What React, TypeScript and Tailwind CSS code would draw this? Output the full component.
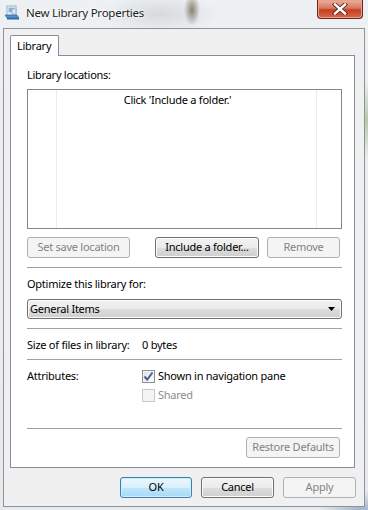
import React from "react";

const font = "font-['Segoe_UI','Noto_Sans','Liberation_Sans',sans-serif] tracking-[-0.25px]";

const btnNormal =
  "h-[21px] rounded-[3px] border border-[#707070] bg-[linear-gradient(to_bottom,#f2f2f2_0%,#ebebeb_50%,#dddddd_51%,#cfcfcf_100%)] shadow-[inset_0_0_0_1px_#fcfcfc] text-[11px] text-black flex items-center justify-center";
const btnDisabled =
  "h-[21px] rounded-[3px] border border-[#adb2b5] bg-[#f4f4f4] text-[11px] text-[#838383] flex items-center justify-center";
const btnDefault =
  "h-[21px] rounded-[3px] border border-[#3c7fb1] bg-[linear-gradient(to_bottom,#eaf6fd_0%,#d9f0fc_50%,#bee6fd_51%,#a7d9f5_100%)] shadow-[inset_0_0_0_1px_#cfeefd] text-[11px] text-black flex items-center justify-center";

const Separator = ({ className = "" }: { className?: string }) => (
  <div className={`h-px bg-[#a0a0a0] ${className}`}></div>
);

const LibraryIcon = () => (
  <svg width="16" height="16" viewBox="0 0 16 16">
    <rect x="3" y="1" width="9" height="9" fill="#f4f7fb" stroke="#8a9bb0" strokeWidth="0.8" />
    <rect x="4.5" y="2.5" width="6" height="5" fill="#7fb6e6" />
    <path d="M1 10 L13 10 L15 13 L3 13 Z" fill="#4d8fd0" stroke="#2f6aa6" strokeWidth="0.6" />
    <path d="M3 13 L15 13 L15 14.5 L3 14.5 Z" fill="#2f6aa6" />
    <rect x="8" y="4" width="4" height="5" fill="#dfe8f2" stroke="#8a9bb0" strokeWidth="0.6" />
  </svg>
);

const CloseGlyph = () => (
  <svg width="16" height="12" viewBox="0 0 16 12">
    <path d="M3 1.5 L13 10.5 M13 1.5 L3 10.5" stroke="#5a2a20" strokeWidth="4.2" strokeLinecap="square" />
    <path d="M3 1.5 L13 10.5 M13 1.5 L3 10.5" stroke="#ffffff" strokeWidth="2.4" strokeLinecap="square" />
  </svg>
);

const Checkbox = ({ checked, disabled }: { checked?: boolean; disabled?: boolean }) => (
  <div
    className={`w-[13px] h-[13px] shrink-0 border flex items-center justify-center ${
      disabled
        ? "border-[#c8c8c8] bg-[#f4f4f4]"
        : "border-[#8e8f8f] bg-[linear-gradient(135deg,#dcdcdc_0%,#f4f4f4_60%,#ffffff_100%)] shadow-[inset_0_0_0_1px_#f4f4f4]"
    }`}
  >
    {checked && (
      <svg width="11" height="11" viewBox="0 0 11 11">
        <path d="M1.5 5.5 L4.2 8.6 L9.5 1.5" fill="none" stroke="#4a5f97" strokeWidth="2" />
      </svg>
    )}
  </div>
);

export default function App() {
  return (
    <div
      className={`w-[368px] h-[510px] overflow-hidden ${font} bg-[radial-gradient(ellipse_8px_16px_at_192px_10px,#8b8270_0%,transparent_100%),radial-gradient(ellipse_60px_20px_at_160px_14px,#d6dadd_0%,transparent_100%),radial-gradient(ellipse_20px_40px_at_368px_120px,#b9c7a8_0%,transparent_100%),radial-gradient(ellipse_40px_20px_at_360px_510px,#9fb4cc_0%,transparent_100%),linear-gradient(to_bottom,#eef1f3,#e6eaed)]`}
    >
      {/* title bar */}
      <div className="h-[28px] flex items-start">
        <div className="mt-[5px] ml-[4px]">
          <LibraryIcon />
        </div>
        <div className="ml-[6px] mt-[5px] text-[11.5px] leading-[16px] text-[#1e1e1e] [text-shadow:0_0_6px_#fff,0_0_3px_#fff]">
          New Library Properties
        </div>
        <div className="ml-auto mr-[5px] w-[46px] h-[19px] rounded-b-[4px] border border-t-0 border-[#6b2418] bg-[linear-gradient(to_bottom,#eab3a3_0%,#d8765e_45%,#c6401f_55%,#d26b4c_100%)] shadow-[inset_0_0_0_1px_#efa08c] flex items-center justify-center">
          <CloseGlyph />
        </div>
      </div>

      {/* client area */}
      <div className="ml-[3px] w-[362px] h-[479px] border border-[#8e9399] bg-[#f0f0f0] pt-[6px] pl-[6px] pr-[8px] flex flex-col">
        {/* tab */}
        <div className="flex">
          <div className="relative z-10 -mb-px w-[49px] h-[21px] bg-white border border-b-0 border-[#898c95] rounded-t-[2px] pl-[6px] text-[11px] leading-[20px] text-black">
            Library
          </div>
        </div>

        {/* tab panel */}
        <div className="w-[345px] h-[413px] bg-white border border-[#898c95] pl-[16px] pr-[12px] flex flex-col text-[11px] text-black">
          <div className="mt-[12px] h-[14px] leading-[14px]">Library locations:</div>

          <div className="mt-[7px] h-[140px] border border-[#828790] flex">
            <div className="w-[29px] border-r border-[#e6edf5]"></div>
            <div className="w-[260px] border-r border-[#e6edf5] pt-[2px] flex justify-center">
              <span className="-ml-[18px] leading-[16px]">Click 'Include a folder.'</span>
            </div>
            <div className="flex-1"></div>
          </div>

          <div className="mt-[8px] flex">
            <div className={`${btnDisabled} w-[103px]`}>Set save location</div>
            <div className={`${btnNormal} w-[104px] ml-[25px]`}>Include a folder...</div>
            <div className={`${btnDisabled} w-[73px] ml-[8px]`}>Remove</div>
          </div>

          <Separator className="mt-[9px]" />

          <div className="mt-[9px] h-[14px] leading-[14px]">Optimize this library for:</div>

          <div className="mt-[8px] h-[20px] rounded-[3px] border border-[#707070] bg-[linear-gradient(to_bottom,#f2f2f2_0%,#ebebeb_50%,#dddddd_51%,#cfcfcf_100%)] shadow-[inset_0_0_0_1px_#fcfcfc] flex items-center pl-[2px] pr-[6px]">
            <span className="leading-[14px]">General Items</span>
            <svg className="ml-auto" width="7" height="4" viewBox="0 0 7 4">
              <path d="M0 0 L7 0 L3.5 4 Z" fill="#000" />
            </svg>
          </div>

          <Separator className="mt-[9px]" />

          <div className="mt-[9px] h-[14px] leading-[14px] flex">
            <div className="w-[115px] shrink-0 whitespace-nowrap">Size of files in library:</div>
            <div>0 bytes</div>
          </div>

          <Separator className="mt-[7px]" />

          <div className="mt-[9px] h-[14px] leading-[14px] flex items-center">
            <div className="w-[115px]">Attributes:</div>
            <Checkbox checked />
            <div className="ml-[3px]">Shown in navigation pane</div>
          </div>
          <div className="mt-[5px] h-[14px] leading-[14px] flex items-center">
            <div className="w-[115px]"></div>
            <Checkbox disabled />
            <div className="ml-[3px] text-[#8d8d8d]">Shared</div>
          </div>

          <Separator className="mt-[26px]" />

          <div className="mt-[8px] flex justify-end">
            <div className={`${btnDisabled} w-[94px] mr-[2px]`}>Restore Defaults</div>
          </div>
        </div>

        {/* dialog buttons */}
        <div className="mt-[9px] flex justify-end gap-[9px]">
          <div className={`${btnDefault} w-[72px]`}>OK</div>
          <div className={`${btnNormal} w-[73px]`}>Cancel</div>
          <div className={`${btnDisabled} w-[73px]`}>Apply</div>
        </div>
      </div>
    </div>
  );
}
